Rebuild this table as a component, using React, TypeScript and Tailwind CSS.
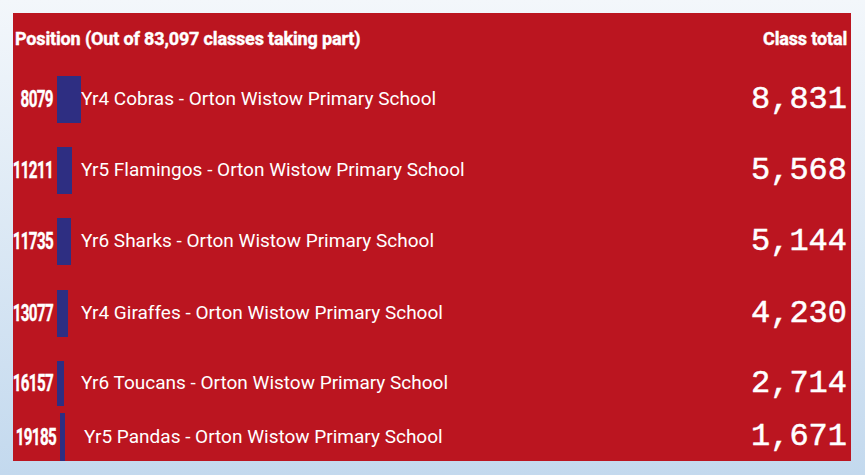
const rows = [
  { rank: '8079', name: 'Yr4 Cobras - Orton Wistow Primary School', total: 8831, mt: 'mt-[13px]', h: 'h-[47px]', shift: '' },
  { rank: '11211', name: 'Yr5 Flamingos - Orton Wistow Primary School', total: 5568, mt: 'mt-[24px]', h: 'h-[47px]', shift: '' },
  { rank: '11735', name: 'Yr6 Sharks - Orton Wistow Primary School', total: 5144, mt: 'mt-[24px]', h: 'h-[47px]', shift: '' },
  { rank: '13077', name: 'Yr4 Giraffes - Orton Wistow Primary School', total: 4230, mt: 'mt-[25px]', h: 'h-[47px]', shift: '' },
  { rank: '16157', name: 'Yr6 Toucans - Orton Wistow Primary School', total: 2714, mt: 'mt-[24px]', h: 'h-[45px]', shift: '' },
  { rank: '19185', name: 'Yr5 Pandas - Orton Wistow Primary School', total: 1671, mt: 'mt-[7px]', h: 'h-[48px]', shift: 'ml-[3px]' },
];

const max = 8831;

export default function App() {
  return (
    <div className="w-[865px] h-[475px] bg-gradient-to-b from-[#f3f7fb] to-[#c3d9ee] pt-[13px] pl-[13px]">
      <div className="w-[838px] h-[448px] bg-[#bb1520] overflow-hidden text-white font-['Roboto',sans-serif]">
        <div className="h-[50px] flex items-center justify-between pl-[2px] pr-[4px]">
          <span className="text-[18px] font-bold tracking-[-0.15px] [-webkit-text-stroke:0.4px_white]">Position (Out of 83,097 classes taking part)</span>
          <span className="text-[18px] font-bold tracking-[-0.15px] [-webkit-text-stroke:0.4px_white]">Class total</span>
        </div>
        {rows.map((r) => (
          <div key={r.rank} className={`flex items-center ${r.mt} ${r.h} ${r.shift}`}>
            <div className="w-[40px] shrink-0 flex justify-end whitespace-nowrap">
              <span className="inline-block origin-right scale-x-[0.66] text-[23px] font-bold tracking-[-1px] leading-none [-webkit-text-stroke:0.4px_white]">{r.rank}</span>
            </div>
            <div className="w-[24px] ml-[4px] h-full shrink-0">
              <div className="h-full bg-[#2e2e82]" style={{ width: Math.max(5, Math.round((r.total / max) * 24)) }} />
            </div>
            <div className="flex-1 text-[19px] whitespace-nowrap">{r.name}</div>
            <div className="pr-[4px] font-['Liberation_Mono',monospace] text-[32px] leading-none [-webkit-text-stroke:0.5px_white]">
              {r.total.toLocaleString('en-GB')}
            </div>
          </div>
        ))}
      </div>
    </div>
  );
}
